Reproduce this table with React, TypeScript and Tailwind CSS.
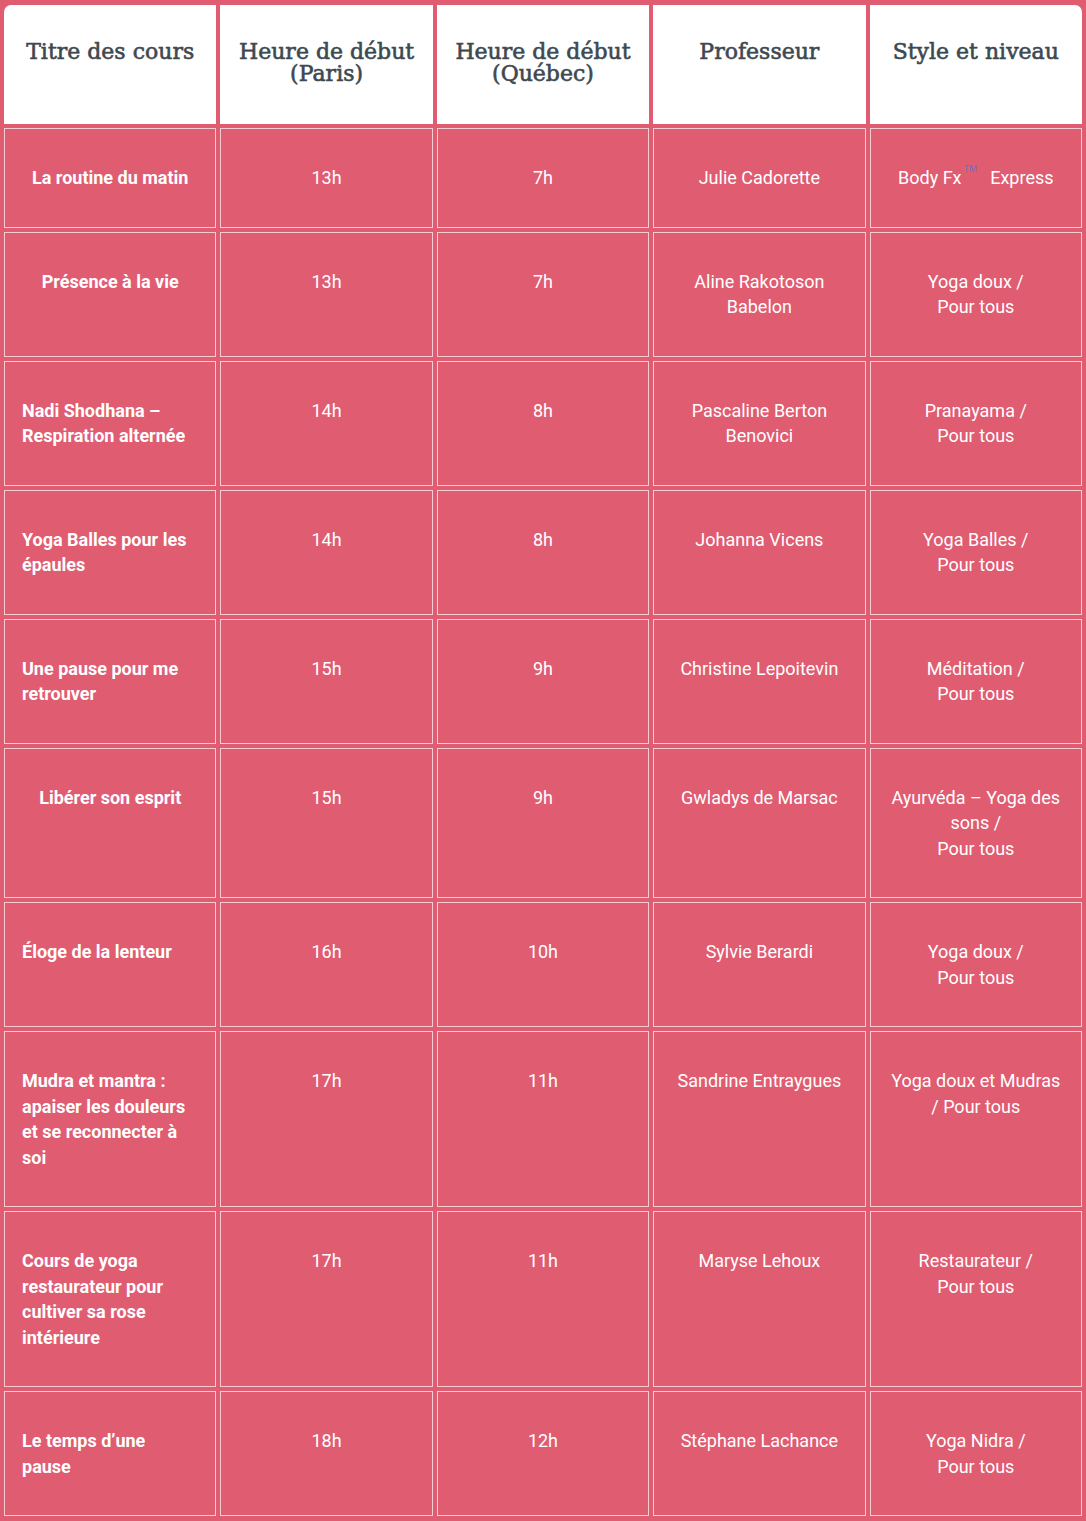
import React from 'react';

type Row = {
  title: string;
  titleCenter?: boolean;
  paris: string;
  quebec: string;
  prof: React.ReactNode;
  style: React.ReactNode;
};

const rows: Row[] = [
  {
    title: 'La routine du matin',
    titleCenter: true,
    paris: '13h',
    quebec: '7h',
    prof: 'Julie Cadorette',
    style: (
      <>
        Body Fx<sup className="text-[9px] text-[#6b6fd6] align-[8px] ml-[2px]">TM</sup>
        {'\u00a0\u00a0 '}Express
      </>
    ),
  },
  {
    title: 'Présence à la vie',
    titleCenter: true,
    paris: '13h',
    quebec: '7h',
    prof: 'Aline Rakotoson Babelon',
    style: (
      <>
        Yoga doux /<br />Pour tous
      </>
    ),
  },
  {
    title: 'Nadi Shodhana – Respiration alternée',
    paris: '14h',
    quebec: '8h',
    prof: 'Pascaline Berton Benovici',
    style: (
      <>
        Pranayama /<br />Pour tous
      </>
    ),
  },
  {
    title: 'Yoga Balles pour les épaules',
    paris: '14h',
    quebec: '8h',
    prof: 'Johanna Vicens',
    style: (
      <>
        Yoga Balles /<br />Pour tous
      </>
    ),
  },
  {
    title: 'Une pause pour me retrouver',
    paris: '15h',
    quebec: '9h',
    prof: 'Christine Lepoitevin',
    style: (
      <>
        Méditation /<br />Pour tous
      </>
    ),
  },
  {
    title: 'Libérer son esprit',
    titleCenter: true,
    paris: '15h',
    quebec: '9h',
    prof: 'Gwladys de Marsac',
    style: (
      <>
        Ayurvéda – Yoga des sons /<br />Pour tous
      </>
    ),
  },
  {
    title: 'Éloge de la lenteur',
    paris: '16h',
    quebec: '10h',
    prof: 'Sylvie Berardi',
    style: (
      <>
        Yoga doux /<br />Pour tous
      </>
    ),
  },
  {
    title: 'Mudra et mantra : apaiser les douleurs et se reconnecter à soi',
    paris: '17h',
    quebec: '11h',
    prof: 'Sandrine Entraygues',
    style: 'Yoga doux et Mudras / Pour tous',
  },
  {
    title: 'Cours de yoga restaurateur pour cultiver sa rose intérieure',
    paris: '17h',
    quebec: '11h',
    prof: 'Maryse Lehoux',
    style: (
      <>
        Restaurateur /<br />Pour tous
      </>
    ),
  },
  {
    title: 'Le temps d’une pause',
    paris: '18h',
    quebec: '12h',
    prof: 'Stéphane Lachance',
    style: (
      <>
        Yoga Nidra /<br />Pour tous
      </>
    ),
  },
];

const headers = ['Titre des cours', 'Heure de début (Paris)', 'Heure de début (Québec)', 'Professeur', 'Style et niveau'];

const cell =
  'border border-[#f7cdd5] px-[17px] py-[36px] align-top text-[18px] leading-[25.5px] text-white';

export default function App() {
  return (
    <div className="min-h-screen bg-[#e05c71] pt-px" style={{ fontFamily: 'Roboto, "Liberation Sans", sans-serif' }}>
      <table className="w-full table-fixed border-separate border-spacing-[4px]">
        <thead>
          <tr>
            {headers.map((h, i) => (
              <th
                key={h}
                className={`h-[119px] bg-white px-[10px] pt-[36px] align-top text-center text-[22px] font-normal leading-[22px] text-[#3e4850] [-webkit-text-stroke:0.6px_#3e4850] ${
                  i === 0 ? 'rounded-tl-[7px]' : ''
                } ${i === headers.length - 1 ? 'rounded-tr-[7px]' : ''}`}
                style={{ fontFamily: '"DejaVu Serif", "Liberation Serif", serif' }}
              >
                {h}
              </th>
            ))}
          </tr>
        </thead>
        <tbody>
          {rows.map((r) => (
            <tr key={r.title}>
              <td className={`${cell} font-bold ${r.titleCenter ? 'text-center' : 'text-left'}`}>{r.title}</td>
              <td className={`${cell} text-center`}>{r.paris}</td>
              <td className={`${cell} text-center`}>{r.quebec}</td>
              <td className={`${cell} text-center`}>{r.prof}</td>
              <td className={`${cell} text-center`}>{r.style}</td>
            </tr>
          ))}
        </tbody>
      </table>
    </div>
  );
}
